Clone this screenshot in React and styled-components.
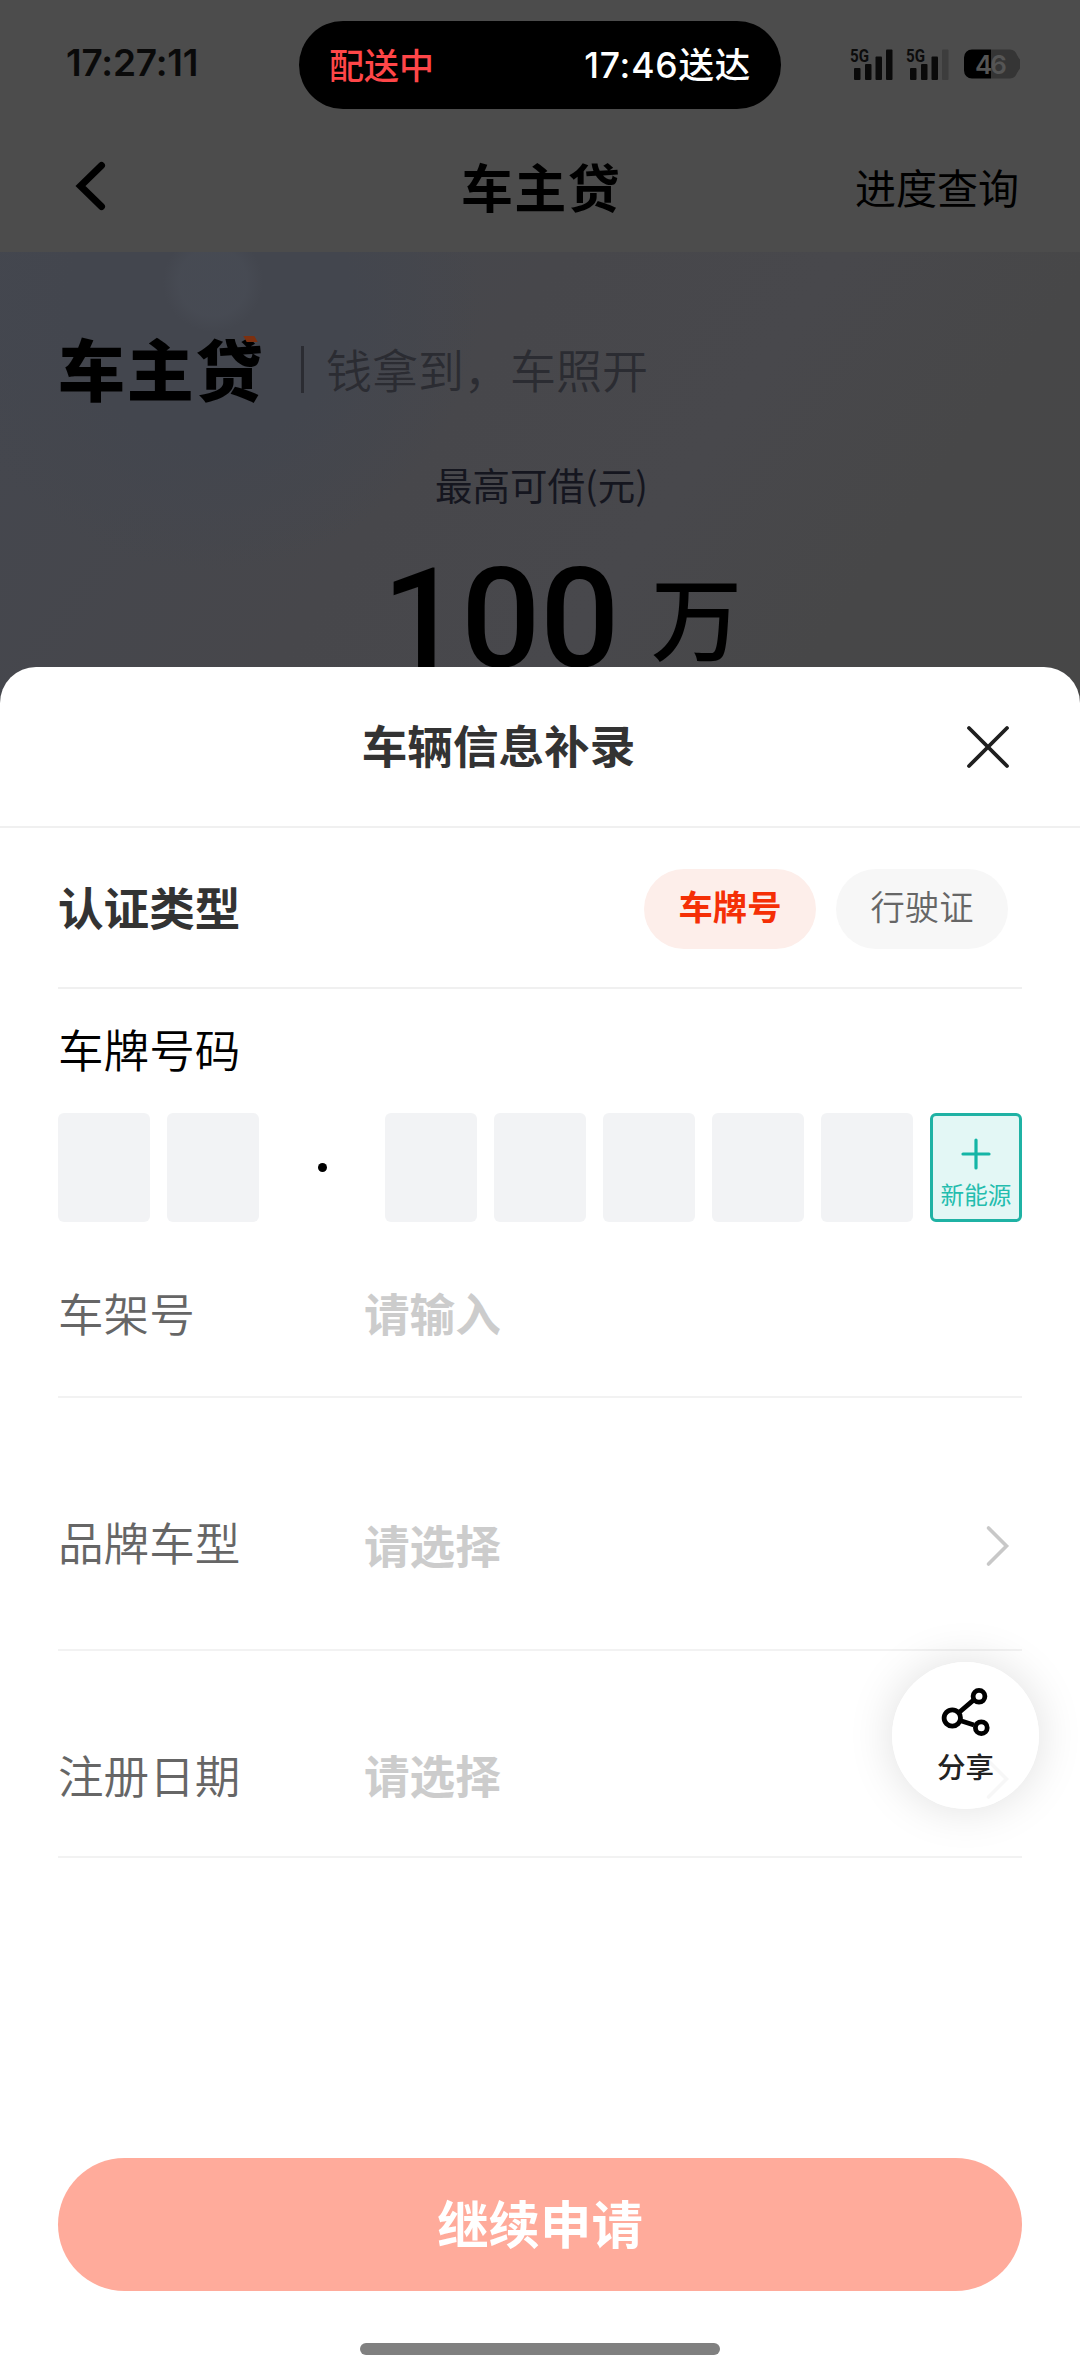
import { createGlobalStyle, styled } from "styled-components";

const GlobalStyle = createGlobalStyle`
    * {
        margin: 0;
        padding: 0;
        box-sizing: border-box;
    }

    body {
        background-color: #fff;
        font-family: 'Noto Sans CJK SC', sans-serif;
    }

    button {
        border: none;
        background: none;
        font-family: inherit;
    }
`

const Screen = styled.div`
    position: relative;
    width: 1080px;
    height: 2376px;
    display: flex;
    flex-direction: column;
    background-color: #4c4c4c;
    overflow: hidden;
    white-space: nowrap;
`

const StatusBar = styled.div`
    height: 120px;
    flex-shrink: 0;
    display: grid;
    grid-template-columns: 299px 482px 299px;
    align-items: start;
    padding-top: 21px;
`

const Clock = styled.span`
    padding-left: 66px;
    color: #0a0a0a;
    font-family: Inter, sans-serif;
    font-size: 37px;
    font-weight: 600;
    letter-spacing: -0.2px;
    line-height: 84px;
`

const Island = styled.div`
    height: 88px;
    padding: 0 30px;
    border-radius: 44px;
    background-color: #000;
    display: flex;
    justify-content: space-between;
    line-height: 85px;
`

const Delivery = styled.span`
    color: #ff4648;
    font-size: 35px;
    font-weight: 500;
`

const Arrival = styled.span`
    padding-top: 2px;
    color: #fff;
    font-family: Inter, 'Noto Sans CJK SC', sans-serif;
    font-size: 35.5px;
    font-weight: 500;
    letter-spacing: 0.8px;
`

const Indicators = styled.div`
    display: flex;
    align-items: center;
    gap: 13px;
    padding: 27px 0 0 69px;
`

const Signal = styled.svg`
    width: 43px;
    height: 32px;
    flex-shrink: 0;
    overflow: visible;
`

const Battery = styled.svg`
    width: 58px;
    height: 30px;
    margin-left: 2px;
`

const NavBar = styled.header`
    height: 132px;
    flex-shrink: 0;
    display: grid;
    grid-template-columns: 1fr auto 1fr;
    align-items: center;
    padding: 0 61px 0 72px;
`

const BackIcon = styled.svg`
    width: 36px;
    height: 52px;
`

const NavTitle = styled.h1`
    font-size: 52px;
    font-weight: 700;
    line-height: 60px;
    letter-spacing: 1.4px;
    margin-left: -9px;
`

const NavAction = styled.span`
    justify-self: end;
    font-size: 41px;
    line-height: 60px;
    padding-bottom: 1px;
`

const Hero = styled.section`
    height: 468px;
    flex-shrink: 0;
    display: flex;
    flex-direction: column;
    align-items: center;
    background:
        radial-gradient(circle at 213px 30px, rgba(73, 77, 86, 0.6) 0 34px, transparent 50px),
        radial-gradient(circle at 210px 50px, #43464e 0, #43464e 140px, transparent 270px),
        linear-gradient(125deg, #44474f 0%, #47474b 40%, #48484c 60%, #474748 78%, #474747 100%);
`

const Brand = styled.div`
    width: 100%;
    height: 150px;
    padding: 81px 0 0 58px;
    display: flex;
    align-items: center;
`

const Logo = styled.div`
    position: relative;
    margin-top: -2px;
    color: #000;
    font-size: 67px;
    font-weight: 900;
    line-height: 69px;
    letter-spacing: 1.7px;
`

const LogoAccent = styled.i`
    position: absolute;
    top: 4px;
    right: 8px;
    width: 11px;
    height: 6px;
    background-color: #7c3010;
    transform: skewX(30deg);
`

const Bar = styled.div`
    width: 3px;
    height: 47px;
    margin: 4px 22px 0 37px;
    background-color: #2b2c32;
`

const Slogan = styled.p`
    color: #2b2c32;
    font-size: 46px;
    font-weight: 350;
    line-height: 60px;
`

const LimitLabel = styled.p`
    margin: 52px 0 0 3px;
    color: #15161f;
    font-size: 37.5px;
    line-height: 60px;
`

const Limit = styled.div`
    display: flex;
    align-items: baseline;
    margin: 35px 0 0 44px;
    gap: 32px;
    line-height: 141px;
`

const Amount = styled.strong`
    font-family: Roboto, sans-serif;
    font-size: 140px;
    font-weight: 500;
    letter-spacing: -0.5px;
`

const Unit = styled.span`
    font-size: 91px;
    font-weight: 500;
    position: relative;
    top: -13px;
`

const Sheet = styled.main`
    position: relative;
    flex: 1;
    margin-top: -53px;
    display: flex;
    flex-direction: column;
    background-color: #fff;
    border-radius: 36px 36px 0 0;
`

const SheetHeader = styled.div`
    height: 161px;
    display: grid;
    grid-template-columns: 1fr auto 1fr;
    align-items: center;
    padding: 0 69px;
    border-bottom: 2px solid #f0f0f0;
`

const SheetTitle = styled.h2`
    grid-column: 2;
    margin: -5px 83px 0 0;
    color: #333;
    font-size: 45.6px;
    font-weight: 700;
    line-height: 60px;
`

const CloseIcon = styled.svg`
    justify-self: end;
    width: 46px;
    height: 46px;
`

const Form = styled.div`
    padding: 0 58px;
`

const TypeRow = styled.div`
    height: 161px;
    display: flex;
    align-items: center;
    justify-content: space-between;
    padding: 3px 14px 0 0;
    border-bottom: 2px solid #f0f0f0;
`

const TypeLabel = styled.h3`
    margin-top: -6px;
    color: #333;
    font-size: 45.6px;
    font-weight: 700;
    line-height: 60px;
`

const Chips = styled.div`
    display: flex;
    gap: 20px;
`

const Chip = styled.button`
    width: 172px;
    height: 80px;
    padding-bottom: 8px;
    border-radius: 40px;
    background-color: ${({ $active }) => ($active ? "#fdeeea" : "#f7f7f7")};
    color: ${({ $active }) => ($active ? "#f52f06" : "#666")};
    font-size: 34.3px;
    font-weight: ${({ $active }) => ($active ? 700 : 350)};
    line-height: 50px;
`

const PlateLabel = styled.p`
    margin-top: 29px;
    color: #000;
    font-size: 45.6px;
    font-weight: 350;
    line-height: 60px;
`

const Plate = styled.div`
    display: grid;
    grid-template-columns: repeat(9, 92px);
    gap: 17px;
    height: 109px;
    margin-top: 35px;
`

const PlateCell = styled.div`
    border-radius: 6px;
    background-color: #f2f3f5;
`

const PlateDot = styled.div`
    width: 9px;
    height: 9px;
    border-radius: 50%;
    background-color: #000;
    place-self: center;
`

const NewEnergy = styled.div`
    display: flex;
    flex-direction: column;
    align-items: center;
    padding-top: 22px;
    border: 3px solid #1fb2a4;
    border-radius: 6px;
    background-color: #e3f7f5;
    color: #23bdae;
    font-size: 23.6px;
    line-height: 30px;
`

const PlusIcon = styled.svg`
    width: 30px;
    height: 32px;
    margin-bottom: 9px;
    flex-shrink: 0;
`

const Field = styled.div`
    height: ${({ $height }) => $height}px;
    padding-top: ${({ $top }) => $top}px;
    display: grid;
    grid-template-columns: 306px 1fr auto;
    align-items: start;
    padding-right: 12px;
    border-bottom: 2px solid #f2f2f2;
`

const FieldLabel = styled.label`
    color: #666;
    font-size: 45.6px;
    font-weight: 350;
    line-height: 60px;
`

const Placeholder = styled.span`
    margin-top: ${({ $drop }) => $drop || 0}px;
    color: #ccc;
    font-size: 45.6px;
    font-weight: 700;
    line-height: 60px;
`

const Arrow = styled.svg`
    width: 26px;
    height: 44px;
    margin-top: 13px;
`

const Submit = styled.button`
    height: 133px;
    margin: auto 58px 52px;
    padding-bottom: 6px;
    border-radius: 67px;
    background-color: #ffab9b;
    color: #fff;
    font-size: 51.4px;
    font-weight: 700;
    line-height: 70px;
`

const HomeIndicator = styled.div`
    width: 360px;
    height: 12px;
    margin: 0 auto 21px;
    border-radius: 6px;
    background-color: #808080;
`

const ShareButton = styled.div`
    position: absolute;
    left: 892px;
    top: 1662px;
    width: 147px;
    height: 147px;
    border-radius: 50%;
    padding-top: 25px;
    display: flex;
    flex-direction: column;
    align-items: center;
    background-color: rgba(255, 255, 255, 0.86);
    box-shadow: 0 0 46px rgba(0, 0, 0, 0.13);
    color: #222;
    font-size: 28.5px;
    font-weight: 500;
    line-height: 36px;
`

const ShareIcon = styled.svg`
    width: 50px;
    height: 50px;
    margin-bottom: 11px;
    flex-shrink: 0;
`

const BARS = [
    { x: 4, y: 20 },
    { x: 15, y: 16 },
    { x: 25.5, y: 8.5 },
    { x: 36, y: 1.5 },
];

const SignalIcon = ({ level }) => (
    <Signal viewBox="0 0 43 32">
        <text x="0" y="13.500" fontFamily="Roboto" fontSize="18" fontWeight="700" textLength="19" lengthAdjust="spacingAndGlyphs" fill="#0c0c0c">5G</text>
        {BARS.map((bar, i) => (
            <rect key={bar.x} x={bar.x} y={bar.y} width="6.5" height={32 - bar.y} rx="1" fill={i < level ? "#0a0a0a" : "#3d3d3d"} />
        ))}
    </Signal>
)

const BatteryIcon = () => (
    <Battery viewBox="0 0 58 30">
        <path d="M27 0.5H46a8 8 0 0 1 7 5.500q1.500 3 3 4.500v9q-1.500 1.500-3 4.500a8 8 0 0 1-7 5.500H27z" fill="#353535" />
        <path d="M27 0.5H8a8 8 0 0 0-8 8v13a8 8 0 0 0 8 8h19z" fill="#000" />
        <text x="11" y="24.500" fontFamily="Inter" fontSize="26" fontWeight="600" textLength="32" fill="#555">46</text>
    </Battery>
)

const ArrowIcon = () => (
    <Arrow viewBox="0 0 26 44" fill="none" stroke="#c8c8c8" strokeWidth="3.6" strokeLinecap="round">
        <path d="M4.500 4L22.500 22L4.500 40" />
    </Arrow>
)

const SelectField = ({ label, drop, ...props }) => (
    <Field {...props}>
        <FieldLabel>{label}</FieldLabel>
        <Placeholder $drop={drop}>请选择</Placeholder>
        <ArrowIcon />
    </Field>
)

const App = () => {

    return (

        <Screen>

            <GlobalStyle />

            <StatusBar>
                <Clock>17:27:11</Clock>
                <Island>
                    <Delivery>配送中</Delivery>
                    <Arrival>17:46送达</Arrival>
                </Island>
                <Indicators>
                    <SignalIcon level={4} />
                    <SignalIcon level={3} />
                    <BatteryIcon />
                </Indicators>
            </StatusBar>

            <NavBar>
                <BackIcon viewBox="0 0 36 52" fill="none" stroke="#000" strokeWidth="7" strokeLinecap="round">
                    <path d="M29.500 5.500L8.500 26L29.500 46.500" />
                </BackIcon>
                <NavTitle>车主贷</NavTitle>
                <NavAction>进度查询</NavAction>
            </NavBar>

            <Hero>
                <Brand>
                    <Logo>车主贷<LogoAccent /></Logo>
                    <Bar />
                    <Slogan>钱拿到，车照开</Slogan>
                </Brand>
                <LimitLabel>最高可借(元)</LimitLabel>
                <Limit>
                    <Amount>100</Amount>
                    <Unit>万</Unit>
                </Limit>
            </Hero>

            <Sheet>

                <SheetHeader>
                    <SheetTitle>车辆信息补录</SheetTitle>
                    <CloseIcon viewBox="0 0 46 46" stroke="#1f1f1f" strokeWidth="3.8" strokeLinecap="round">
                        <path d="M4 4L42 42M42 4L4 42" />
                    </CloseIcon>
                </SheetHeader>

                <Form>
                    <TypeRow>
                        <TypeLabel>认证类型</TypeLabel>
                        <Chips>
                            <Chip $active>车牌号</Chip>
                            <Chip>行驶证</Chip>
                        </Chips>
                    </TypeRow>

                    <PlateLabel>车牌号码</PlateLabel>

                    <Plate>
                        <PlateCell />
                        <PlateCell />
                        <PlateDot />
                        <PlateCell />
                        <PlateCell />
                        <PlateCell />
                        <PlateCell />
                        <PlateCell />
                        <NewEnergy>
                            <PlusIcon viewBox="0 0 30 32" stroke="#14b5a6" strokeWidth="3.2" strokeLinecap="round">
                                <path d="M2 16H28M15 2V30" />
                            </PlusIcon>
                            新能源
                        </NewEnergy>
                    </Plate>

                    <Field $height={176} $top={60}>
                        <FieldLabel>车架号</FieldLabel>
                        <Placeholder>请输入</Placeholder>
                    </Field>
                    <SelectField label="品牌车型" $height={253} $top={113} drop={3} />
                    <SelectField label="注册日期" $height={207} $top={93} />
                </Form>

                <Submit>继续申请</Submit>

                <HomeIndicator />

            </Sheet>

            <ShareButton>
                <ShareIcon viewBox="0 0 50 50" fill="none" stroke="#000" strokeWidth="4.800">
                    <path d="M18 25.500L32.500 13.200M19 33.500L33 38" />
                    <circle cx="11.300" cy="31" r="8.200" />
                    <circle cx="38" cy="9.300" r="5.900" />
                    <circle cx="40.300" cy="40.700" r="5.900" />
                </ShareIcon>
                分享
            </ShareButton>

        </Screen>

    )

}

export default App;
